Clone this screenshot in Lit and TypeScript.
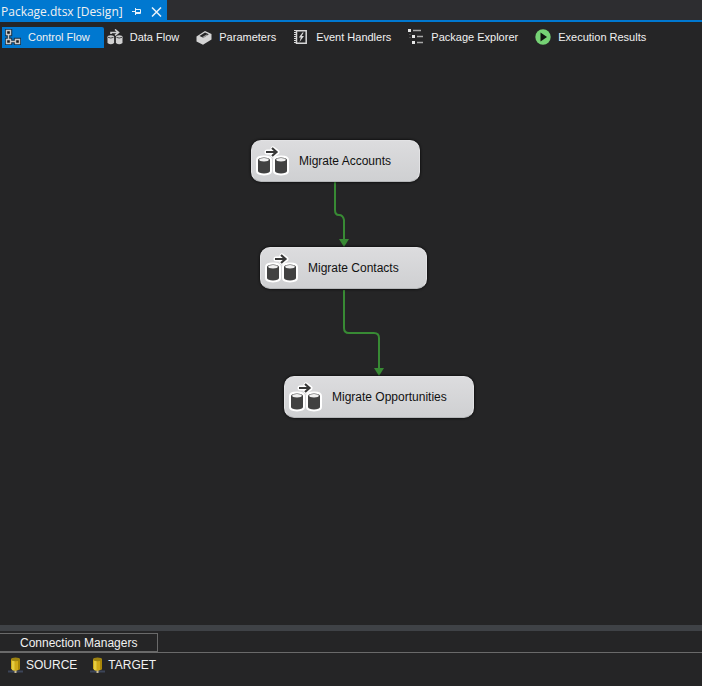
import { LitElement, html, css, svg } from "lit";
import { customElement, state } from "lit/decorators.js";

const cylinder = (x: number, y: number, w: number, h: number) => svg`
  <path d="M${x} ${y + 2}v${h - 4}a${w / 2} 2.4 0 0 0 ${w} 0v${-(h - 4)}a${w / 2} 2.4 0 0 0 ${-w} 0z"/>`;

const icons = {
  control: svg`
    <g fill="none" stroke="#14324a" stroke-width="3.500"><path d="M1.500 1.500h4v4h-4zM1.500 10.500h4v4h-4zM10.500 10.500h4v4h-4zM3.500 5.500v5M5.500 12.500h5"/></g>
    <g fill="#1b1b1c" stroke="#c8c8c8" stroke-width="1.400"><path d="M1.500 1.500h4v4h-4zM1.500 10.500h4v4h-4zM10.500 10.500h4v4h-4zM3.500 5.500v5M5.500 12.500h5"/></g>`,
  data: svg`
    <g fill="#d0d0d0"><path d="M.5 8v6q3.300 2.500 6.600 0V8zM8.900 8v6q3.300 2.500 6.600 0V8z"/><ellipse cx="3.800" cy="7.800" rx="3.300" ry="1.600"/><ellipse cx="12.200" cy="7.800" rx="3.300" ry="1.600"/></g>
    <path d="M1 8.300q2.800 1.500 5.600 0M9.400 8.300q2.800 1.500 5.600 0" fill="none" stroke="#252526" stroke-width=".8"/>
    <path d="M4 5V3.500h7M8 .5l3.500 3L8 6.300" fill="none" stroke="#d0d0d0" stroke-width="1.600"/>`,
  params: svg`
    <path d="M.5 7.500L9 2l6.500 3v5.500L7 15.800.5 12.500z" fill="#d4d4d4"/>
    <path d="M3.500 7L9 3.600l3.800 1.700-5.500 3.500z" fill="#252526"/>
    <path d="M6.300 8.100l4.200-2.600 1.500.6-4.700 2.800z" fill="#9c9c9c"/>`,
  events: svg`
    <path d="M3.500 1.700h9.700v12.600H3.500z" fill="#252526" stroke="#d8d8d8" stroke-width="1.500"/>
    <path d="M2.500 1v14" stroke="#d8d8d8" stroke-width="3" stroke-dasharray="1 1"/>
    <path d="M9.500 3.500L5.800 8.500h2L6.500 13l4.500-6H8.700l2-3.500z" fill="#d8d8d8"/>`,
  explorer: svg`
    <path d="M0 0h3v3H0zM4 6h3v3H4zM4 12h3v3H4z" fill="#e6e6e6"/>
    <path d="M5 1.500h8M9 7.500h6M9 13.500h6" stroke="#a8a8a8" stroke-width="1.400"/><path d="M2 5v1M2 8v1" stroke="#777"/>`,
  run: svg`<circle cx="8" cy="8" r="7.700" fill="#76d275"/><path d="M5.500 3.500v9L12 8z" fill="#101410"/>`,
};

const db = svg`
  <path d="M0 14.500h15" stroke="#3c4558" stroke-width="2"/><path d="M7.500 13v3" stroke="#c8bc98" stroke-width="2"/>
  <path d="M3 2v10q4.500 3.500 9 0V2z" fill="#d0aa18"/><path d="M4 3v10q1.200.5 2.500.6V3z" fill="#e4cc40"/>
  <path d="M10 3v10.200q1-.4 2-1.200V2z" fill="#a98708"/><ellipse cx="7.500" cy="2.300" rx="4.500" ry="1.900" fill="#9c8212"/>`;

const flow = svg`
  <g fill="#fff" stroke="#fff" stroke-width="4" stroke-linejoin="round" stroke-linecap="round">
    ${cylinder(3, 13, 12, 15)}${cylinder(20, 13, 12, 15)}
    <path d="M12 7h10M18 4l4 3-4 3" stroke-width="5"/>
  </g>
  <g fill="#414141">${cylinder(3, 13, 12, 15)}${cylinder(20, 13, 12, 15)}</g>
  <ellipse cx="9" cy="14.700" rx="4.800" ry="1.700" fill="#f0f0f0"/><ellipse cx="26" cy="14.700" rx="4.800" ry="1.700" fill="#f0f0f0"/>
  <path d="M11 7h10.500M17 3l4.500 4-4.500 4" fill="none" stroke="#383838" stroke-width="2.200"/>`;

const tabs: { label: string; icon: keyof typeof icons }[] = [
  { label: "Control Flow", icon: "control" },
  { label: "Data Flow", icon: "data" },
  { label: "Parameters", icon: "params" },
  { label: "Event Handlers", icon: "events" },
  { label: "Package Explorer", icon: "explorer" },
  { label: "Execution Results", icon: "run" },
];

const tasks = [
  { label: "Migrate Accounts", x: 251, y: 90, w: 169 },
  { label: "Migrate Contacts", x: 260, y: 197, w: 167 },
  { label: "Migrate Opportunities", x: 284, y: 326, w: 190 },
];

@customElement("app-root")
export class AppRoot extends LitElement {
  @state() private active = 0;

  static styles = css`
    :host {
      display: flex;
      flex-direction: column;
      min-height: 100vh;
      background: #252526;
      color: #f1f1f1;
      font: 12px/16px "Liberation Sans", Arial, sans-serif;
    }
    button {
      font: inherit;
      color: inherit;
      background: none;
      border: 0;
      padding: 0;
      margin: 0;
    }
    svg { display: block; flex: none; }
    .documents {
      display: flex;
      background: #2d2d30;
      border-bottom: 2px solid #0078d0;
    }
    .document {
      display: flex;
      align-items: center;
      height: 20px;
      padding: 3px 5px 0 1px;
      box-sizing: border-box;
      background: #0078d0;
      font: 12px/17px "Open Sans", "Noto Sans", sans-serif;
    }
    .title { margin-right: 9px; }
    .pin { margin-right: 9px; }
    .views {
      display: flex;
      padding: 5px 2px 0;
      height: 28px;
      box-sizing: border-box;
      font-size: 11px;
    }
    .view {
      display: flex;
      align-items: center;
      gap: 7px;
      height: 21px;
      padding: 0 14px 2px 3px;
      box-sizing: border-box;
      white-space: nowrap;
    }
    .view.active { background: #0078d0; border-radius: 0 2px 0 0; }
    .canvas {
      position: relative;
      flex: 1;
      min-height: 420px;
    }
    .links { position: absolute; left: 0; top: 0; }
    .task {
      position: absolute;
      display: flex;
      align-items: center;
      gap: 9px;
      height: 42px;
      padding-left: 3px;
      box-sizing: border-box;
      border-radius: 10px;
      border: 1px solid #e2e2e4;
      border-bottom-color: #b4b6b8;
      background: linear-gradient(#dcdcde, #cfd0d2);
      box-shadow: 0 0 3px #000;
      color: #111;
      white-space: nowrap;
    }
    .splitter { height: 6px; background: #3f4246; }
    .panel-tabs {
      display: flex;
      padding-top: 2px;
      border-bottom: 1px solid #6a6a6a;
    }
    .panel-tab {
      height: 19px;
      padding: 0 20px;
      border: 1px solid #6a6a6a;
      border-left: 0;
    }
    .connections {
      display: flex;
      gap: 13px;
      height: 33px;
      padding: 4px 8px 0;
      box-sizing: border-box;
    }
    .connection {
      display: flex;
      align-items: center;
      gap: 3px;
      height: 16px;
    }
  `;

  render() {
    return html`
      <header class="documents">
        <div class="document">
          <span class="title">Package.dtsx [Design]</span>
          <button class="pin" aria-label="Pin tab">
            <svg width="10" height="10" viewBox="0 0 10 10" fill="none" stroke="#e8f2fa"><path d="M0 4.500h3M3.500 1v7M3.500 2.500h5v4h-5M4 5.500h5"/></svg>
          </button>
          <button aria-label="Close tab">
            <svg width="11" height="10" viewBox="0 0 11 10" fill="none" stroke="#e8f2fa" stroke-width="1.500"><path d="M1 .5l9 9M10 .5l-9 9"/></svg>
          </button>
        </div>
      </header>
      <nav class="views">
        ${tabs.map((tab, i) => html`
          <button class="view ${i === this.active ? "active" : ""}" @click=${() => (this.active = i)}>
            <svg width="16" height="16" viewBox="0 0 16 16">${icons[tab.icon]}</svg>
            <span>${tab.label}</span>
          </button>`)}
      </nav>
      <main class="canvas">
        <svg class="links" width="480" height="400" fill="none" stroke="#388a34" stroke-width="2">
          <path d="M335 132v28q0 5 4 5t5 5v22M344 240v38q0 5 5 5h25q5 0 5 5v33"/>
          <path d="M339 189h10l-5 8zM374 318h10l-5 8z" fill="#388a34" stroke="none"/>
        </svg>
        ${tasks.map((task) => html`
          <div class="task" style="left:${task.x}px;top:${task.y}px;width:${task.w}px">
            <svg width="35" height="32" viewBox="0 0 35 32">${flow}</svg>
            <span>${task.label}</span>
          </div>`)}
      </main>
      <div class="splitter"></div>
      <div class="panel-tabs"><button class="panel-tab">Connection Managers</button></div>
      <section class="connections">
        ${["SOURCE", "TARGET"].map((name) => html`
          <div class="connection">
            <svg width="15" height="16" viewBox="0 0 15 16">${db}</svg>
            <span>${name}</span>
          </div>`)}
      </section>
    `;
  }
}
